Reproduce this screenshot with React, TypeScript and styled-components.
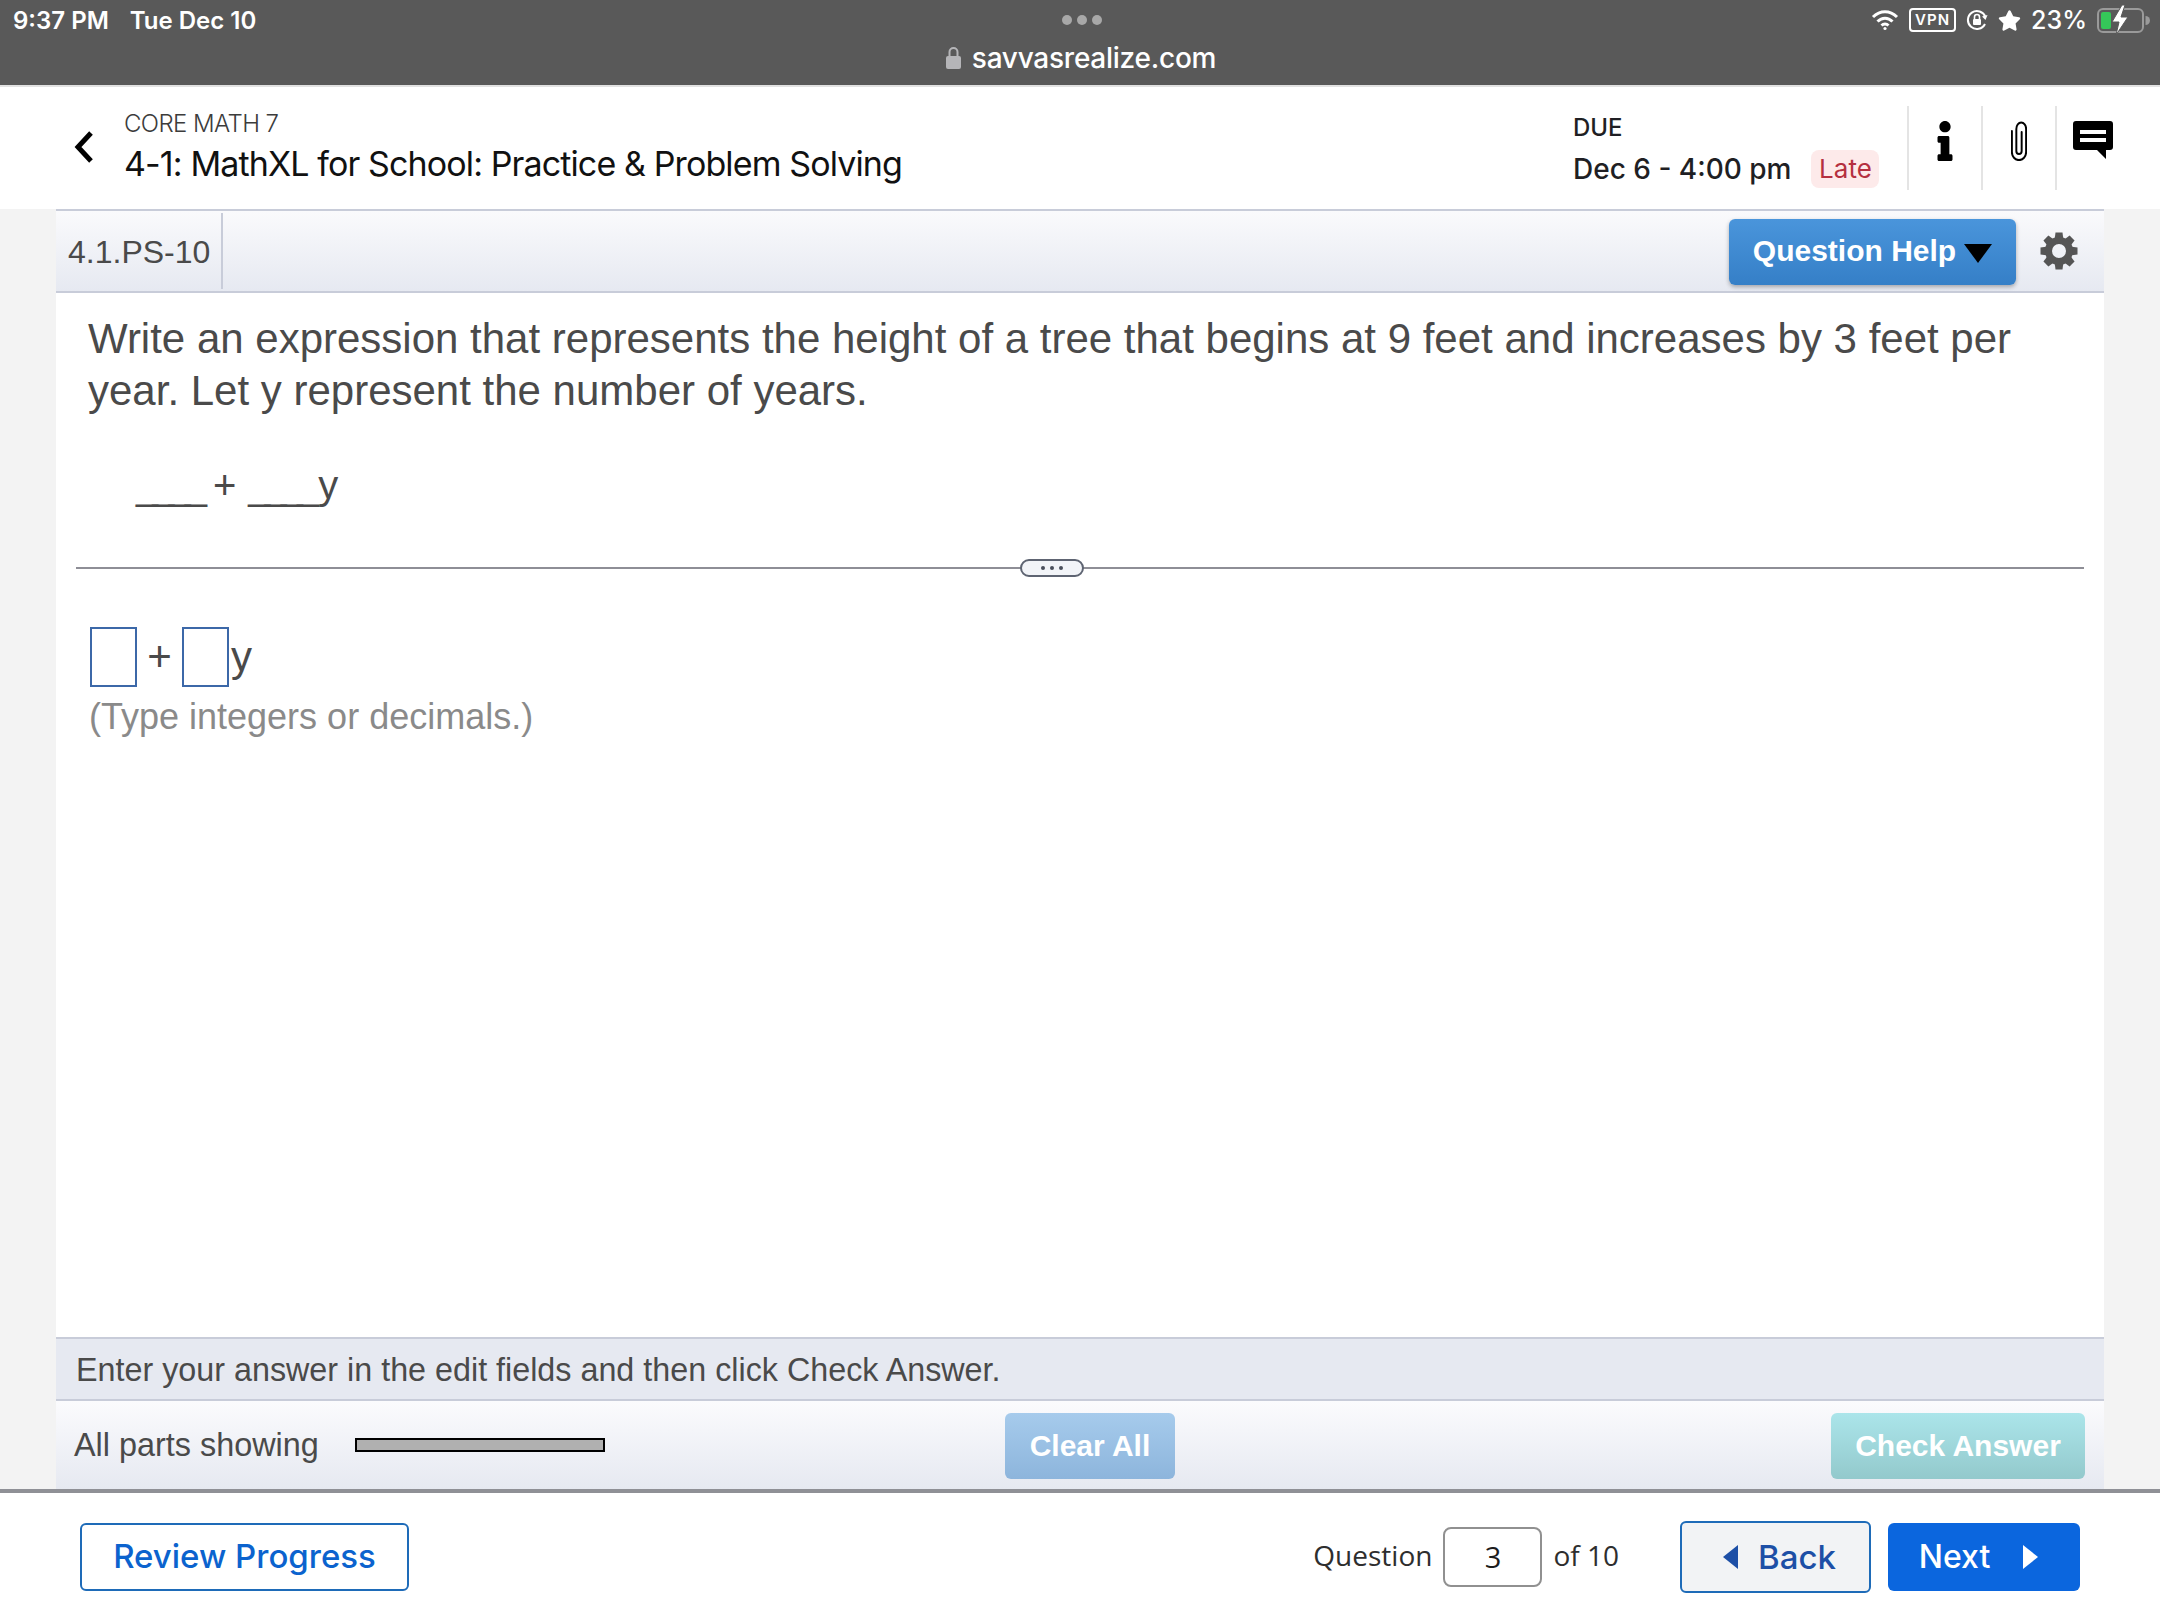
import React from "react";
import styled, { createGlobalStyle } from "styled-components";
import { FaInfo, FaStar } from "react-icons/fa";

const GlobalStyle = createGlobalStyle`
  html, body {
    margin: 0;
    padding: 0;
    background: #fff;
  }
`;

const Page = styled.div`
  width: 2160px;
  height: 1620px;
  display: flex;
  flex-direction: column;
  overflow: hidden;
  font-family: "Liberation Sans", Arial, sans-serif;
`;

const BrowserBar = styled.div`
  height: 85px;
  flex-shrink: 0;
  box-sizing: content-box;
  background: #595959;
  border-bottom: 2px solid #e2e2e2;
  color: #fff;
  font-family: Inter, sans-serif;
  display: flex;
  flex-direction: column;
`;

const StatusRow = styled.div`
  height: 40px;
  padding: 0 10px 0 13px;
  display: grid;
  grid-template-columns: 1fr auto 1fr;
  align-items: center;
`;

const Clock = styled.div`
  font-size: 24px;
  font-weight: 600;
  display: flex;
  gap: 21px;
`;

const Dots = styled.div`
  display: flex;
  gap: 5px;
`;

const Dot = styled.span`
  width: 10px;
  height: 10px;
  border-radius: 50%;
  background: #a8a8a8;
`;

const StatusIcons = styled.div`
  display: flex;
  justify-content: flex-end;
  align-items: center;
  gap: 10px;
  font-size: 25px;
  font-weight: 500;
`;

const VpnBadge = styled.span`
  border: 2px solid #fff;
  border-radius: 4px;
  font-size: 15px;
  font-weight: 600;
  letter-spacing: 1px;
  padding: 0 4px;
  height: 20px;
  line-height: 20px;
`;

const UrlRow = styled.div`
  display: flex;
  justify-content: center;
  align-items: center;
  gap: 11px;
  padding-left: 2px;
  font-size: 28px;
  font-weight: 500;
  letter-spacing: -0.25px;
  height: 36px;
`;

const CourseHeader = styled.header`
  height: 122px;
  flex-shrink: 0;
  background: #fff;
  display: flex;
  align-items: center;
  padding-left: 72px;
`;

const BackChevron = styled.svg`
  width: 24px;
  height: 36px;
  margin-right: 28px;
  margin-top: -2px;
`;

const CourseInfo = styled.div`
  flex: 1;
  display: flex;
  flex-direction: column;
  gap: 5px;
  margin-top: -4px;
`;

const CourseName = styled.div`
  font-family: Inter, sans-serif;
  font-size: 24px;
  font-weight: 300;
  letter-spacing: -0.6px;
  color: #3c3c3c;
`;

const AssignmentTitle = styled.div`
  font-family: Inter, sans-serif;
  font-size: 34px;
  color: #111;
  letter-spacing: -0.88px;
`;

const DueBlock = styled.div`
  width: 334px;
  display: flex;
  flex-direction: column;
  gap: 8px;
  margin-top: 4px;
  font-family: Inter, sans-serif;
  color: #1f1f24;
`;

const DueLabel = styled.div`
  font-size: 24px;
  font-weight: 500;
`;

const DueRow = styled.div`
  display: flex;
  align-items: center;
  gap: 20px;
  font-size: 28px;
  font-weight: 500;
  white-space: nowrap;
`;

const LateBadge = styled.span`
  width: 68px;
  height: 38px;
  border-radius: 8px;
  background: #fdeaea;
  color: #b53040;
  font-size: 26px;
  font-weight: 400;
  display: flex;
  align-items: center;
  justify-content: center;
`;

const IconCell = styled.div`
  width: 74px;
  height: 84px;
  box-sizing: border-box;
  border-left: 2px solid #e4e4e4;
  display: flex;
  justify-content: center;
  align-items: flex-start;
  padding-top: 15px;
  color: #000;
`;

const HeaderEnd = styled.div`
  width: 31px;
`;

const Workspace = styled.main`
  flex: 1;
  min-height: 0;
  background: #f3f3f3;
  padding: 0 56px;
  display: flex;
`;

const Sheet = styled.div`
  flex: 1;
  background: #fff;
  display: flex;
  flex-direction: column;
`;

const QuestionBar = styled.div`
  height: 84px;
  box-sizing: border-box;
  flex-shrink: 0;
  border-top: 2px solid #c8ccd9;
  border-bottom: 2px solid #c8ccd9;
  background: linear-gradient(#fafafc, #e6e9f1);
  display: flex;
  align-items: center;
  justify-content: space-between;
  padding-right: 26px;
`;

const QuestionId = styled.div`
  height: 76px;
  width: 167px;
  box-sizing: border-box;
  border-right: 2px solid #c8ccd9;
  padding: 2px 0 0 12px;
  display: flex;
  align-items: center;
  font-size: 32px;
  color: #4a4a4a;
`;

const BarActions = styled.div`
  display: flex;
  align-items: center;
  gap: 24px;
`;

const ActionButton = styled.button<{ $top: string; $bottom: string; $width: number }>`
  width: ${(p) => p.$width}px;
  height: 66px;
  border: 0;
  border-radius: 6px;
  background: linear-gradient(${(p) => p.$top}, ${(p) => p.$bottom});
  color: #fff;
  font-family: "Liberation Sans", Arial, sans-serif;
  font-size: 30px;
  font-weight: 700;
  display: flex;
  align-items: center;
  justify-content: center;
  gap: 8px;
  padding: 0;
`;

const HelpButton = styled(ActionButton)`
  margin-top: 2px;
  padding-bottom: 2px;
  box-shadow: 0 2px 4px rgba(0, 0, 0, 0.3);
`;

const PartsButton = styled(ActionButton)`
  margin-top: 2px;
`;

const DownTriangle = styled.span`
  width: 0;
  height: 0;
  border-left: 14px solid transparent;
  border-right: 14px solid transparent;
  border-top: 19px solid #000;
  margin-top: 4px;
`;

const QuestionPane = styled.section`
  height: 274px;
  flex-shrink: 0;
  box-sizing: border-box;
  padding: 20px 32px 0;
  color: #4a4a4a;
`;

const QuestionText = styled.div`
  font-size: 42px;
  line-height: 52px;
`;

const Expression = styled.div`
  margin: 42px 0 0 48px;
  font-size: 40px;
  line-height: 52px;
  display: flex;
  gap: 12px;
`;

const Blank = styled.span`
  letter-spacing: -6px;
`;

const Unknown = styled.span`
  margin-left: -7px;
`;

const Divider = styled.div`
  height: 2px;
  margin: 0 20px;
  padding-right: 56px;
  flex-shrink: 0;
  background: #8e8e96;
  display: flex;
  justify-content: center;
  align-items: center;
`;

const DragHandle = styled.div`
  width: 64px;
  height: 18px;
  box-sizing: border-box;
  flex-shrink: 0;
  border: 2px solid #5e6472;
  border-radius: 9px;
  background: #f2f4f8;
  display: flex;
  justify-content: center;
  align-items: center;
  gap: 5px;
`;

const HandleDot = styled.span`
  width: 4px;
  height: 4px;
  border-radius: 50%;
  background: #4a4f5c;
`;

const AnswerPane = styled.section`
  flex: 1;
  min-height: 0;
  padding: 58px 34px 0;
  color: #4a4a4a;
`;

const AnswerRow = styled.div`
  display: flex;
  align-items: center;
  font-size: 42px;
  height: 60px;
`;

const AnswerBox = styled.input`
  width: 47px;
  height: 60px;
  box-sizing: border-box;
  border: 2px solid #3c68a8;
  border-radius: 0;
  background: #fff;
  padding: 0;
  outline: none;
`;

const Plus = styled.span`
  width: 45px;
  text-align: center;
`;

const VarLabel = styled.span`
  margin-left: 2px;
`;

const Hint = styled.div`
  margin: 9px 0 0 -1px;
  font-size: 36px;
  color: #8a8a8a;
`;

const InstructionBar = styled.div`
  height: 64px;
  flex-shrink: 0;
  box-sizing: border-box;
  border-top: 2px solid #c8ccd9;
  border-bottom: 2px solid #c8ccd9;
  background: #e6e9f1;
  padding: 2px 0 0 20px;
  display: flex;
  align-items: center;
  font-size: 32.3px;
  color: #4a4a4a;
`;

const PartsBar = styled.div`
  height: 88px;
  flex-shrink: 0;
  background: linear-gradient(#fbfbfd, #e6e9f1);
  display: grid;
  grid-template-columns: 931px 1fr auto;
  align-items: center;
  padding: 0 19px 0 18px;
`;

const PartsInfo = styled.div`
  display: flex;
  align-items: center;
  gap: 36px;
  font-size: 32.4px;
  color: #4a4a4a;
`;

const ProgressTrack = styled.div`
  width: 250px;
  height: 14px;
  box-sizing: border-box;
  border: 2px solid #000;
  background: #b0b0b0;
`;

const NavFooter = styled.footer`
  height: 131px;
  flex-shrink: 0;
  box-sizing: border-box;
  background: #fff;
  border-top: 4px solid #8f9096;
  display: flex;
  align-items: center;
  justify-content: space-between;
  padding: 0 80px;
  font-family: Inter, sans-serif;
`;

const OutlineButton = styled.button`
  width: 329px;
  height: 68px;
  box-sizing: border-box;
  background: #fff;
  border: 2px solid #1e6bb8;
  border-radius: 6px;
  color: #0b63ce;
  font-family: Inter, sans-serif;
  font-size: 33px;
  font-weight: 500;
  padding: 0 0 2px;
`;

const Pager = styled.div`
  display: flex;
  align-items: center;
`;

const PagerText = styled.span`
  font-family: "Open Sans", sans-serif;
  font-size: 28px;
  color: #2e2e2e;
  padding-bottom: 3px;
`;

const PageInput = styled.div`
  width: 99px;
  height: 60px;
  box-sizing: border-box;
  margin: 0 11px;
  border: 2px solid #909090;
  border-radius: 8px;
  display: flex;
  align-items: center;
  justify-content: center;
  font-family: "Open Sans", sans-serif;
  font-size: 29px;
  color: #1c1c1c;
`;

const NavButton = styled.button<{ $primary?: boolean }>`
  width: ${(p) => (p.$primary ? 192 : 191)}px;
  height: ${(p) => (p.$primary ? 68 : 72)}px;
  box-sizing: border-box;
  border: ${(p) => (p.$primary ? "0" : "2px solid #1e6bb8")};
  border-radius: 6px;
  background: ${(p) => (p.$primary ? "#0b66de" : "#f2f3f5")};
  color: ${(p) => (p.$primary ? "#fff" : "#1d4fa6")};
  font-family: Inter, sans-serif;
  font-size: ${(p) => (p.$primary ? 32 : 33)}px;
  font-weight: 500;
  margin-left: ${(p) => (p.$primary ? 17 : 61)}px;
  display: flex;
  align-items: center;
  justify-content: center;
  gap: ${(p) => (p.$primary ? 33 : 20)}px;
  padding: ${(p) => (p.$primary ? "0 11px 0 0" : "0 0 0 8px")};
`;

const Caret = styled.span<{ $left?: boolean }>`
  width: 0;
  height: 0;
  border-top: 12px solid transparent;
  border-bottom: 12px solid transparent;
  ${(p) =>
    p.$left
      ? "border-right: 15px solid #1d4fa6;"
      : "border-left: 15px solid #fff;"}
`;

const WifiIcon = () => (
  <svg width="28" height="22" viewBox="0 0 28 22" fill="none" stroke="#fff" strokeWidth="3">
    <path d="M2 8 C9 1 19 1 26 8" />
    <path d="M6.5 12.5 C11 8 17 8 21.5 12.5" />
    <path d="M10.5 16.5 C12.5 14.5 15.5 14.5 17.5 16.5" />
    <circle cx="14" cy="19.5" r="1.6" fill="#fff" stroke="none" />
  </svg>
);

const RotationLockIcon = () => (
  <svg width="22" height="22" viewBox="0 0 22 22" fill="none">
    <path d="M19 15 A9 9 0 1 1 19.4 8" stroke="#fff" strokeWidth="2" />
    <path d="M21.5 6 L19.5 11 L16 7.5 Z" fill="#fff" />
    <rect x="7" y="10" width="8" height="6" rx="1" fill="#fff" />
    <path d="M8.5 10 V8 a2.5 2.5 0 0 1 5 0 V10" stroke="#fff" strokeWidth="1.6" />
  </svg>
);

const BatteryIcon = () => (
  <svg width="53" height="30" viewBox="0 0 53 30">
    <rect x="1" y="4" width="45" height="23" rx="5" fill="none" stroke="#9a9a9a" strokeWidth="2" />
    <rect x="4" y="7" width="10" height="17" rx="2" fill="#35c759" />
    <path d="M48.5 11 a3 3 0 0 1 0 9 Z" fill="#9a9a9a" />
    <path d="M25 0 L15 17 H22 L19 30 L31 12 H24 L28 0 Z" fill="#fff" stroke="#595959" strokeWidth="1" />
  </svg>
);

const LockIcon = () => (
  <svg width="15" height="24" viewBox="0 0 15 24">
    <path d="M3.5 11 V6 a4 4 0 0 1 8 0 V11" fill="none" stroke="#b5b5b8" strokeWidth="2" />
    <rect x="0" y="10" width="15" height="13" rx="2" fill="#b5b5b8" />
  </svg>
);

const PaperclipIcon = () => (
  <svg
    width="16"
    height="40"
    viewBox="0 0 18 40"
    preserveAspectRatio="none"
    fill="none"
    stroke="#000"
    strokeWidth="2.2"
    strokeLinecap="round"
  >
    <path d="M12 11 V30 a3 3 0 0 1 -6 0 V8 a5.5 6.5 0 0 1 11 0 V31 a8 8 0 0 1 -16 0 V10" />
  </svg>
);

const ChatIcon = () => (
  <svg width="40" height="38" viewBox="0 0 40 38">
    <path
      fillRule="evenodd"
      d="M3 0 H37 a3 3 0 0 1 3 3 V26 a3 3 0 0 1 -3 3 H33 V38 L24 29 H3 a3 3 0 0 1 -3 -3 V3 a3 3 0 0 1 3 -3 Z M7 9 V13 H33 V9 Z M7 17 V21 H33 V17 Z"
      fill="#000"
    />
  </svg>
);

const GearIcon = () => (
  <svg width="38" height="38" viewBox="0 0 38 38">
    {[0, 45, 90, 135, 180, 225, 270, 315].map((angle) => (
      <path key={angle} d="M15.5 0.5 H22.5 L23.5 8 H14.5 Z" fill="#555" transform={`rotate(${angle} 19 19)`} />
    ))}
    <circle cx="19" cy="19" r="10.5" fill="none" stroke="#555" strokeWidth="7" />
  </svg>
);

export default function App() {
  return (
    <Page>
      <GlobalStyle />
      <BrowserBar>
        <StatusRow>
          <Clock>
            <span>9:37 PM</span>
            <span>Tue Dec 10</span>
          </Clock>
          <Dots>
            <Dot />
            <Dot />
            <Dot />
          </Dots>
          <StatusIcons>
            <WifiIcon />
            <VpnBadge>VPN</VpnBadge>
            <RotationLockIcon />
            <FaStar size={23} />
            <span>23%</span>
            <BatteryIcon />
          </StatusIcons>
        </StatusRow>
        <UrlRow>
          <LockIcon />
          <span>savvasrealize.com</span>
        </UrlRow>
      </BrowserBar>

      <CourseHeader>
        <BackChevron viewBox="0 0 24 36" fill="none" stroke="#000" strokeWidth="5">
          <path d="M19 4 L6 18 L19 32" />
        </BackChevron>
        <CourseInfo>
          <CourseName>CORE MATH 7</CourseName>
          <AssignmentTitle>4-1: MathXL for School: Practice &amp; Problem Solving</AssignmentTitle>
        </CourseInfo>
        <DueBlock>
          <DueLabel>DUE</DueLabel>
          <DueRow>
            <span>Dec 6 - 4:00 pm</span>
            <LateBadge>Late</LateBadge>
          </DueRow>
        </DueBlock>
        <IconCell>
          <FaInfo size={40} />
        </IconCell>
        <IconCell>
          <PaperclipIcon />
        </IconCell>
        <IconCell>
          <ChatIcon />
        </IconCell>
        <HeaderEnd />
      </CourseHeader>

      <Workspace>
        <Sheet>
          <QuestionBar>
            <QuestionId>4.1.PS-10</QuestionId>
            <BarActions>
              <HelpButton $top="#4a95db" $bottom="#357fc7" $width={287}>
                Question Help
                <DownTriangle />
              </HelpButton>
              <GearIcon />
            </BarActions>
          </QuestionBar>

          <QuestionPane>
            <QuestionText>
              Write an expression that represents the height of a tree that begins at 9 feet and
              increases by 3 feet per year. Let y represent the number of years.
            </QuestionText>
            <Expression>
              <Blank>____</Blank>
              <span>+</span>
              <Blank>____</Blank>
              <Unknown>y</Unknown>
            </Expression>
          </QuestionPane>

          <Divider>
            <DragHandle>
              <HandleDot />
              <HandleDot />
              <HandleDot />
            </DragHandle>
          </Divider>

          <AnswerPane>
            <AnswerRow>
              <AnswerBox />
              <Plus>+</Plus>
              <AnswerBox />
              <VarLabel>y</VarLabel>
            </AnswerRow>
            <Hint>(Type integers or decimals.)</Hint>
          </AnswerPane>

          <InstructionBar>Enter your answer in the edit fields and then click Check Answer.</InstructionBar>

          <PartsBar>
            <PartsInfo>
              <span>All parts showing</span>
              <ProgressTrack />
            </PartsInfo>
            <PartsButton $top="#a6cbec" $bottom="#8db5dc" $width={170}>
              Clear All
            </PartsButton>
            <PartsButton $top="#abe5ea" $bottom="#93c9cc" $width={254}>
              Check Answer
            </PartsButton>
          </PartsBar>
        </Sheet>
      </Workspace>

      <NavFooter>
        <OutlineButton>Review Progress</OutlineButton>
        <Pager>
          <PagerText>Question</PagerText>
          <PageInput>3</PageInput>
          <PagerText>of 10</PagerText>
          <NavButton>
            <Caret $left />
            Back
          </NavButton>
          <NavButton $primary>
            Next
            <Caret />
          </NavButton>
        </Pager>
      </NavFooter>
    </Page>
  );
}
